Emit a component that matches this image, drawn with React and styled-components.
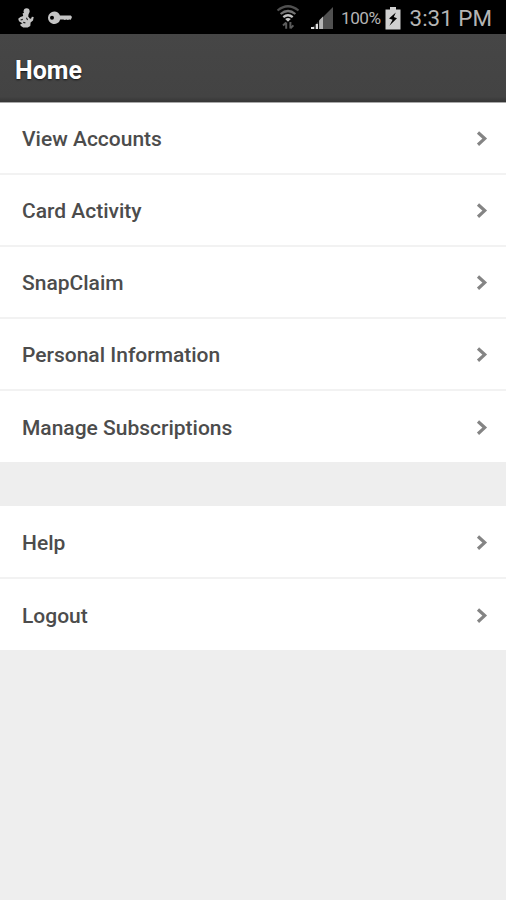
import styled, { createGlobalStyle } from "styled-components";
import React from "react";

const GlobalStyle = createGlobalStyle`
  body {
    margin: 0;
    background: #eeeeee;
    font-family: Roboto, "Liberation Sans", sans-serif;
  }
`;

const accountLinks = [
  "View Accounts",
  "Card Activity",
  "SnapClaim",
  "Personal Information",
  "Manage Subscriptions",
];

const otherLinks = ["Help", "Logout"];

const PageWrapper = styled.div`
  width: 100%;
  min-height: 100vh;
  background: #eeeeee;
`;

const StatusBar = styled.div`
  display: flex;
  justify-content: space-between;
  height: 34px;
  padding: 0 14px 0 17px;
  box-sizing: border-box;
  background: #000000;
  color: #b4b4b4;
`;

const StatusGroup = styled.div`
  display: flex;
  align-items: center;
  height: 36px;
`;

const StatusIcon = styled.svg`
  display: block;
  flex: none;
  margin-right: ${(props) => props.$gap || 0}px;
`;

const BatteryText = styled.span`
  margin-right: 4px;
  font-size: 17.2px;
  line-height: 36px;
  letter-spacing: -0.5px;
`;

const Clock = styled.span`
  font-size: 22.4px;
  line-height: 37px;
`;

const Header = styled.header`
  position: relative;
  display: flex;
  align-items: center;
  height: 68px;
  padding: 4px 15px 0;
  box-sizing: border-box;
  background: linear-gradient(#464646, #434343 92%, #363636);
  box-shadow: 0 1px 0 #a8a8a8;
`;

const Title = styled.h1`
  margin: 0;
  color: #ffffff;
  font-size: 25px;
  font-weight: 700;
  text-shadow: 0 1px 2px rgba(0, 0, 0, 0.7);
`;

const Menu = styled.nav`
  margin-bottom: 44px;
  padding-top: 1px;
  background: #ffffff;
`;

const MenuRow = styled.a`
  display: flex;
  align-items: center;
  justify-content: space-between;
  height: 72px;
  padding: 2px 18px 0 22px;
  box-sizing: border-box;
  border-bottom: 2px solid #f2f2f2;
  color: #4c4c4c;
  font-size: 21px;
  font-weight: 500;
  &:last-child {
    height: 71px;
    padding-bottom: 0;
    border-bottom: 0;
  }
`;

function Chevron() {
  return (
    <svg width="12" height="16" viewBox="0 0 12 16" fill="none">
      <path d="M2 1.5L8.7 7.6L2 13.7" stroke="#848484" strokeWidth="3.2" />
    </svg>
  );
}

function MenuList({ items }) {
  return (
    <Menu>
      {items.map((item) => (
        <MenuRow key={item}>
          {item}
          <Chevron />
        </MenuRow>
      ))}
    </Menu>
  );
}

function FigureIcon() {
  return (
    <StatusIcon $gap={12} width="19" height="22" viewBox="0 0 19 22" fill="#c4c4c4">
      <circle cx="9.6" cy="4.2" r="3" />
      <path d="M5.6 6.2l2.2-.4h4l-.6 3.6 1.6 2.2 1.2.2.9-2 1.8.3-.7 3.4-2.4 2-.3 3.5-2.6 1.6H6.2L3.6 18.8l-.2-1.8 2.2-.6L2 14.2l-.8-2.4 2.2-1.9 2.8-1z" />
      <path d="M3.6 13l2.2-.6M9.4 10.8l1.2 2.2M6.2 15.4l2.2.5" stroke="#222222" strokeWidth="1.1" />
    </StatusIcon>
  );
}

function KeyIcon() {
  return (
    <StatusIcon width="26" height="14" viewBox="0 0 26 14">
      <path
        fill="#c4c4c4"
        fillRule="evenodd"
        d="M6.3.6a6.2 6.2 0 0 1 5.7 3.8h10.8l1.2 1.6-1.2 2.8-1.5-.4-1.5.6-1.4-.6-1.6.5-1.5-.5H12.2A6.2 6.2 0 1 1 6.3.6zM4 4.8a2 2 0 1 0 0 4 2 2 0 0 0 0-4z"
      />
    </StatusIcon>
  );
}

function WifiIcon() {
  return (
    <StatusIcon $gap={10} width="24" height="26" viewBox="0 0 24 26" fill="none">
      <path d="M1.5 5.5Q12-3 22.5 5.5" stroke="#505050" strokeWidth="2.2" />
      <path d="M4.6 9Q12 3 19.4 9" stroke="#737373" strokeWidth="2.2" />
      <path d="M7.3 12.2Q12 8.4 16.7 12.2" stroke="#c0c0c0" strokeWidth="2.3" />
      <path d="M9.2 14Q12 12 14.8 14L12 16.8z" fill="#c8c8c8" />
      <path d="M10.2 17.5v6.3M7 20.4l3.2-3M14.4 17v6.6M17.4 20.4l-3 3" stroke="#5c5c5c" strokeWidth="2" />
    </StatusIcon>
  );
}

function SignalIcon() {
  return (
    <StatusIcon $gap={7} width="24" height="24" viewBox="0 0 24 24">
      <path d="M23 1v22H1z" fill="#505050" />
      <path d="M1 21h3.5v2H1zM5.5 18H8v5H5.5z" fill="#e0e0e0" />
      <path d="M9 14.5l4-4V23H9z" fill="#b5b5b5" />
      <path d="M5 17v6M8.6 13v10" stroke="#000000" strokeWidth="1" />
    </StatusIcon>
  );
}

function BatteryIcon() {
  return (
    <StatusIcon $gap={9} width="16" height="23" viewBox="0 0 16 23">
      <path d="M5 0h6v2.6h4.5v19.9H.5V2.6H5z" fill="#d0d0d0" />
      <path d="M10.8 5.5L4 11.4l3.6 1.4-3.2 6 7.6-7.6-3.2-1.2z" fill="#000000" />
    </StatusIcon>
  );
}

export default function App() {
  return (
    <PageWrapper>
      <GlobalStyle />
      <StatusBar>
        <StatusGroup>
          <FigureIcon />
          <KeyIcon />
        </StatusGroup>
        <StatusGroup>
          <WifiIcon />
          <SignalIcon />
          <BatteryText>100%</BatteryText>
          <BatteryIcon />
          <Clock>3:31 PM</Clock>
        </StatusGroup>
      </StatusBar>
      <Header>
        <Title>Home</Title>
      </Header>
      <MenuList items={accountLinks} />
      <MenuList items={otherLinks} />
    </PageWrapper>
  );
}
